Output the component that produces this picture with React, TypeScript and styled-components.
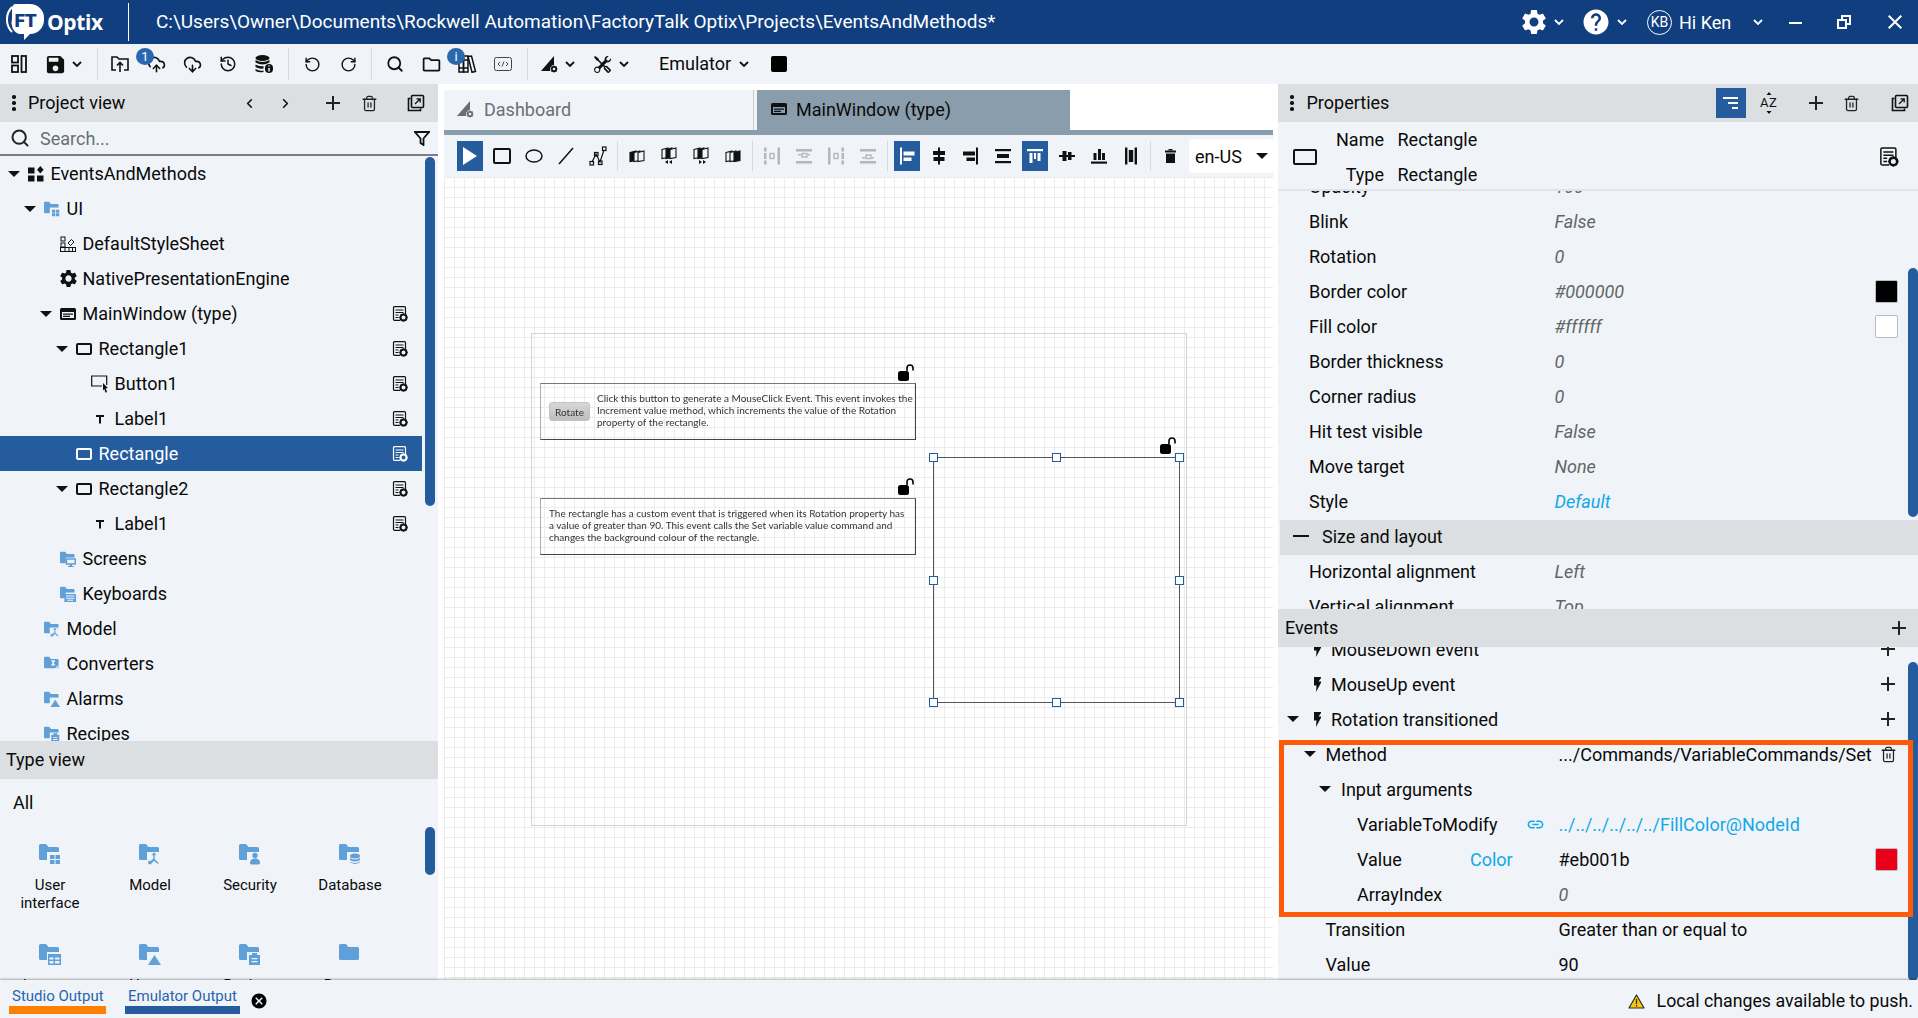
import React from 'react';
import styled, { createGlobalStyle } from 'styled-components';
import {
  ChevronLeft, ChevronRight, CloudDownload, CloudUpload, History, RotateCcw, RotateCw, Search, Trash2,
} from 'lucide-react';
import { MdAdd, MdCancel, MdClose, MdHelp, MdLink, MdOutlineFolder, MdSave, MdSettings } from 'react-icons/md';
import { BsTools } from 'react-icons/bs';

const GlobalStyle = createGlobalStyle`
  html, body { margin: 0; padding: 0; width: 1918px; height: 1018px; overflow: hidden; background: #fff; }
  * { box-sizing: border-box; }
  svg { flex: none; }
  body { font-family: Roboto, "Liberation Sans", sans-serif; font-size: 18px; color: #0a0a0a; }
`;

const Page = styled.div`
  width: 1918px;
  height: 1018px;
  display: flex;
  flex-direction: column;
`;

/* ---- title bar ---- */
const TitleBar = styled.header`
  height: 44px;
  flex: none;
  background: #103e7e;
  color: #fff;
  display: flex;
  align-items: center;
  padding-left: 6px;
`;
const Brand = styled.div`
  width: 123px;
  height: 38px;
  display: flex;
  align-items: center;
  gap: 2px;
  border-right: 1px solid #fff;
  font-size: 21px;
  font-weight: 700;
  font-family: "Open Sans", Roboto, sans-serif;
  letter-spacing: -0.4px;
`;
const TitlePath = styled.div`
  margin-left: 27px;
  padding-bottom: 2px;
  font-size: 19px;
  white-space: nowrap;
  flex: 1;
`;
const TitleActions = styled.div`
  display: flex;
  align-items: center;
  height: 100%;
`;
const TitleSlot = styled.span<{ $w: number; $ml?: number }>`
  width: ${p => p.$w}px;
  margin-left: ${p => p.$ml ?? 0}px;
  display: flex;
  align-items: center;
  justify-content: center;
`;
const Avatar = styled.span`
  width: 25px;
  height: 25px;
  border: 1px solid #fff;
  border-radius: 50%;
  font-size: 14px;
  display: flex;
  align-items: center;
  justify-content: center;
  margin: 0 7px 0 16px;
`;
const UserName = styled.span`
  font-size: 18px;
  width: 69px;
`;

/* ---- main toolbar ---- */
const MainToolbar = styled.div`
  height: 40px;
  flex: none;
  background: #f0f4f8;
  display: flex;
  align-items: center;
  padding-left: 1px;
`;
const TopSlot = styled.span<{ $w?: number; $ml?: number }>`
  position: relative;
  width: ${p => p.$w ?? 36}px;
  margin-left: ${p => p.$ml ?? 0}px;
  height: 100%;
  flex: none;
  display: flex;
  align-items: center;
  justify-content: center;
`;
const TopSep = styled.span<{ $l: number; $r: number }>`
  width: 1px;
  height: 32px;
  flex: none;
  background: #d6dadf;
  margin: 0 ${p => p.$r}px 0 ${p => p.$l}px;
`;
const Badge = styled.span`
  position: absolute;
  left: -2px;
  top: 4px;
  width: 18px;
  height: 17px;
  border-radius: 50%;
  background: #2a67ae;
  color: #fff;
  font-size: 13px;
  line-height: 17px;
  text-align: center;
`;
const EmulatorLabel = styled.span`
  margin-left: 31px;
  padding-bottom: 2px;
  width: 80px;
  font-size: 18px;
`;
const StopSquare = styled.span`
  width: 16px;
  height: 16px;
  background: #000;
  border-radius: 2px;
  margin-left: 22px;
`;

/* ---- panels ---- */
const Body = styled.div`
  height: 896px;
  flex: none;
  display: flex;
`;
const LeftPanel = styled.aside`
  width: 438px;
  flex: none;
  background: #f0f4f8;
  display: flex;
  flex-direction: column;
`;
const PanelHead = styled.div`
  height: 38px;
  flex: none;
  background: #dbdfe2;
  display: flex;
  align-items: center;
  position: relative;
  z-index: 2;
`;
const HeadDots = styled.span`
  width: 4px;
  margin: 0 12px;
  display: flex;
  flex-direction: column;
  gap: 2.5px;
  & > i { width: 3.5px; height: 3.5px; background: #111; border-radius: 50%; display: block; }
`;
const HeadTitle = styled.span<{ $w?: number; $pl?: number }>`
  flex: ${p => (p.$w ? 'none' : 1)};
  width: ${p => (p.$w ? `${p.$w}px` : 'auto')};
  padding: 0 0 2px ${p => p.$pl ?? 0}px;
`;
const HeadSlot = styled.span<{ $w: number; $ml?: number }>`
  width: ${p => p.$w}px;
  margin-left: ${p => p.$ml ?? 0}px;
  flex: none;
  display: flex;
  align-items: center;
  justify-content: center;
`;
const HeadActive = styled(HeadSlot)`
  height: 30px;
  background: #255c9e;
  margin-right: 5px;
`;
const SearchRow = styled.div`
  height: 34px;
  flex: none;
  display: flex;
  align-items: center;
  padding: 0 8px 0 10px;
  gap: 10px;
  border-bottom: 2px solid #7b7f83;
  color: #6a6f74;
`;
const SearchText = styled.span`
  flex: 1;
`;
const TreeArea = styled.div`
  height: 585px;
  flex: none;
  overflow: hidden;
  position: relative;
`;
const Thumb = styled.div<{ $top: number; $h: number; $right?: number }>`
  position: absolute;
  right: ${p => p.$right ?? 3}px;
  top: ${p => p.$top}px;
  height: ${p => p.$h}px;
  width: 10px;
  background: #255c9e;
  border-radius: 5px;
  z-index: 1;
`;
const TreeRow = styled.div<{ $depth: number; $selected?: boolean }>`
  width: 422px;
  height: 35px;
  display: flex;
  align-items: center;
  padding-left: ${p => 6 + p.$depth * 16}px;
  background: ${p => (p.$selected ? '#255c9e' : 'transparent')};
  color: ${p => (p.$selected ? '#fff' : '#0a0a0a')};
`;
const CaretSlot = styled.span`
  width: 22px;
  flex: none;
  padding-left: 2px;
`;
const Caret = styled.i`
  display: block;
  width: 0;
  height: 0;
  border-left: 6px solid transparent;
  border-right: 6px solid transparent;
  border-top: 6px solid #111;
`;
const TreeIcon = styled.span`
  width: 16px;
  height: 20px;
  flex: none;
  display: flex;
  align-items: center;
  justify-content: center;
  margin-right: 6.5px;
`;
const TreeLabel = styled.span`
  flex: 1;
  white-space: nowrap;
`;
const RowDoc = styled.span`
  width: 16px;
  margin-right: 14px;
  display: flex;
`;
const PropDoc = styled.span`
  width: 20px;
  margin-right: 19px;
  display: flex;
`;
const TypeArea = styled.div`
  flex: 1;
  min-height: 0;
  overflow: hidden;
  position: relative;
`;
const AllLabel = styled.div`
  height: 48px;
  line-height: 48px;
  padding-left: 13px;
`;
const TypeGrid = styled.div`
  display: grid;
  grid-template-columns: repeat(4, 100px);
  grid-auto-rows: 100px;
`;
const TypeItem = styled.div`
  display: flex;
  flex-direction: column;
  align-items: center;
  font-size: 15px;
  line-height: 18px;
  text-align: center;
  padding-top: 16px;
  gap: 11px;
`;
const TypeCaption = styled.span`
  width: 76px;
`;

/* ---- center ---- */
const Center = styled.main`
  flex: 1;
  min-width: 0;
  background: #fff;
  padding: 6px 5px 0 6px;
  display: flex;
  flex-direction: column;
`;
const Tabs = styled.div`
  height: 40px;
  flex: none;
  display: flex;
`;
const Tab = styled.div<{ $active?: boolean; $w: number }>`
  width: ${p => p.$w}px;
  background: ${p => (p.$active ? '#8a9dac' : '#f0f4f8')};
  color: ${p => (p.$active ? '#0a0a0a' : '#6b6f73')};
  border-right: ${p => (p.$active ? 'none' : '1px solid #c9ced3')};
  display: flex;
  align-items: center;
  gap: ${p => (p.$active ? 9 : 10)}px;
  padding: 0 0 2px ${p => (p.$active ? 14 : 13)}px;
`;
const TabGap = styled.span`
  width: 3px;
  background: #f0f4f8;
`;
const TabRule = styled.div`
  height: 5px;
  flex: none;
  background: #8a9dac;
`;
const CanvasBar = styled.div`
  height: 42px;
  flex: none;
  background: #f0f4f8;
  display: flex;
  align-items: center;
  padding-left: 13px;
  gap: 6px;
`;
const ToolBtn = styled.span<{ $on?: boolean }>`
  width: 26px;
  height: 30px;
  flex: none;
  background: ${p => (p.$on ? '#255c9e' : 'transparent')};
  display: flex;
  align-items: center;
  justify-content: center;
`;
const ToolSep = styled.span`
  width: 1px;
  height: 30px;
  flex: none;
  background: #d6dadf;
`;
const LangBox = styled.span`
  width: 84px;
  height: 34px;
  flex: none;
  background: #fff;
  border-radius: 3px;
  display: flex;
  align-items: center;
  justify-content: space-between;
  padding: 0 5px 0 6px;
`;
const Canvas = styled.div`
  flex: 1;
  position: relative;
  overflow: hidden;
  background-color: #fff;
  background-image:
    linear-gradient(#ececec 1px, transparent 1px),
    linear-gradient(90deg, #ececec 1px, transparent 1px);
  background-size: 10px 10px;
`;
const Frame = styled.div<{ $x: number; $y: number; $w: number; $h: number }>`
  position: absolute;
  left: ${p => p.$x}px;
  top: ${p => p.$y}px;
  width: ${p => p.$w}px;
  height: ${p => p.$h}px;
`;
const ScreenFrame = styled(Frame)`
  border: 1.5px solid #d4d4d4;
`;
const NoteBox = styled(Frame)`
  border: 1px solid #444;
  border-top-color: #777;
  border-left-color: #aaa;
  display: flex;
  align-items: center;
  padding-bottom: 4px;
  font-family: Lato, "Liberation Sans", sans-serif;
  font-size: 10px;
  line-height: 12px;
  color: #333;
  filter: blur(0.25px);
`;
const NoteText = styled.p<{ $pl: number; $w: number }>`
  margin: 0 0 0 ${p => p.$pl}px;
  width: ${p => p.$w}px;
  flex: none;
`;
const RotateBtn = styled.span`
  position: absolute;
  left: 8px;
  top: 18px;
  width: 41px;
  height: 19px;
  background: linear-gradient(#d8d8d8, #bdbdbd);
  border: 1px solid #c4c4c4;
  border-radius: 3px;
  display: flex;
  align-items: center;
  justify-content: center;
`;
const SelectBox = styled(Frame)`
  border: 1.5px solid #555;
`;
const Handle = styled.i<{ $l: number; $t: number }>`
  position: absolute;
  left: calc(${p => p.$l}% + ${p => (p.$l / 100) * 1.5}px - 5.25px);
  top: calc(${p => p.$t}% + ${p => (p.$t / 100) * 1.5}px - 5.25px);
  width: 9px;
  height: 9px;
  background: #fff;
  border: 1px solid #255c9e;
`;

/* ---- right ---- */
const RightPanel = styled.aside`
  width: 640px;
  flex: none;
  background: #f0f4f8;
  display: flex;
  flex-direction: column;
`;
const PropsTitle = styled(HeadTitle)`
  margin-left: 1px;
`;
const NameBox = styled.div`
  height: 69px;
  flex: none;
  display: flex;
  align-items: center;
  padding: 2px 0 0 15px;
  border-bottom: 2px solid #e0e3e7;
  position: relative;
  z-index: 1;
  background: #f0f4f8;
`;
const NameGrid = styled.div`
  width: 300px;
  margin-right: auto;
  display: grid;
  grid-template-columns: 67px 1fr;
  grid-auto-rows: 35px;
  column-gap: 13.5px;
  align-items: center;
`;
const NameLabel = styled.span`
  text-align: right;
`;
const PropScroll = styled.div`
  height: 418px;
  flex: none;
  overflow: hidden;
  position: relative;
`;
const PropList = styled.div`
  margin-top: -21.5px;
`;
const PropRow = styled.div`
  height: 35px;
  display: grid;
  grid-template-columns: 245.5px 1fr auto;
  align-items: center;
  padding: 0 20px 2px 31px;
`;
const PropValue = styled.span<{ $link?: boolean }>`
  font-style: italic;
  color: ${p => (p.$link ? '#12a8e8' : '#62666a')};
`;
const Swatch = styled.span<{ $c: string }>`
  width: 23px;
  height: 23px;
  border-radius: 2px;
  background: ${p => p.$c};
  border: 1px solid #b9bdc1;
  display: block;
`;
const SectionRow = styled.div`
  height: 35px;
  background: #dbdfe2;
  display: flex;
  align-items: center;
  padding: 0 0 2px 13px;
  gap: 13px;
  margin-left: 2px;
`;
const Dash = styled.i`
  width: 16px;
  height: 2px;
  background: #111;
`;
const EventsScroll = styled.div`
  flex: 1;
  min-height: 0;
  overflow: hidden;
  position: relative;
`;
const EventList = styled.div`
  margin-top: -14.5px;
`;
const EventRow = styled.div<{ $pad: number }>`
  height: 35px;
  display: grid;
  grid-template-columns: ${p => 280.5 - p.$pad}px 1fr 44px;
  align-items: center;
  padding: 0 0 2px ${p => p.$pad}px;
  white-space: nowrap;
`;
const EventName = styled.span`
  display: flex;
  align-items: center;
`;
const EventCaret = styled.span<{ $w?: number }>`
  width: ${p => p.$w ?? 22}px;
  flex: none;
  margin-left: -${p => (p.$w ? p.$w + 18 : 22)}px;
`;
const BoltWrap = styled.span<{ $inline?: boolean }>`
  width: 18px;
  flex: none;
  margin-left: ${p => (p.$inline ? 0 : -18)}px;
  display: flex;
`;
const ArgName = styled.span`
  width: 113px;
  flex: none;
`;
const TypeTag = styled.span`
  color: #12a8e8;
`;
const LinkSlot = styled.span`
  margin-left: auto;
  margin-right: 14px;
  display: flex;
  color: #12a8e8;
`;
const LinkValue = styled.span`
  color: #12a8e8;
`;
const RowTool = styled.span<{ $pl: number }>`
  display: flex;
  align-items: center;
  padding-left: ${p => p.$pl}px;
`;
const FaintValue = styled.span`
  font-style: italic;
  color: #62666a;
`;
const Highlight = styled.div`
  position: absolute;
  left: 1px;
  right: 5px;
  top: 93px;
  height: 177px;
  border: 5px solid #ff5a0a;
  z-index: 2;
  pointer-events: none;
`;

/* ---- status bar ---- */
const StatusBar = styled.footer`
  height: 38px;
  flex: none;
  background: #f0f4f8;
  box-shadow: 0 -1px 2px rgba(0, 0, 0, 0.3);
  position: relative;
  z-index: 3;
  display: flex;
  align-items: flex-start;
  padding-left: 9px;
`;
const OutputTab = styled.span<{ $c: string; $w: number; $mr?: number }>`
  width: ${p => p.$w}px;
  margin-right: ${p => p.$mr ?? 0}px;
  height: 34px;
  padding: 7px 0 0 3px;
  font-size: 15px;
  line-height: 19px;
  white-space: nowrap;
  color: #2a63ad;
  border-bottom: 8px solid ${p => p.$c};
`;
const OutputClose = styled.span`
  margin: 12px 0 0 10px;
  display: flex;
`;
const PushNote = styled.span`
  margin-left: auto;
  height: 100%;
  display: flex;
  align-items: center;
  gap: 12px;
  padding: 0 5px 0 0;
  font-size: 17.75px;
  position: relative;
  top: 2px;
`;

/* ---- drawn icons ---- */
const Chev = ({ c = '#111' }: { c?: string }) => (
  <svg width="10" height="7" viewBox="0 0 10 7"><path d="M1 1l4 4 4-4" fill="none" stroke={c} strokeWidth="1.800" /></svg>
);

const DocGear = ({ c = '#111', size = 16 }: { c?: string; size?: number }) => (
  <svg width={size} height={size} viewBox="0 0 16 16">
    <path d="M2.500.7h10a1 1 0 0 1 1 1v6.500M8 14.300H2.500a1 1 0 0 1-1-1V1.700a1 1 0 0 1 1-1" fill="none" stroke={c} strokeWidth="1.200" />
    <path d="M3.500 4h8M3.500 6.500h8M3.500 9h3M3.500 11.500h3" stroke={c} strokeWidth="1.200" />
    <circle cx="11.500" cy="11.500" r="3" fill="none" stroke={c} strokeWidth="2" />
    <path d="M11.500 7.400v1.400M11.500 14.200v1.400M7.400 11.500h1.400M14.200 11.500h1.400M8.700 8.700l1 1M13.300 13.300l1 1M8.700 14.300l1-1M13.300 9.700l1-1" stroke={c} strokeWidth="1.400" />
  </svg>
);

const PopOut = () => (
  <svg width="18" height="18" viewBox="0 0 18 18" fill="none" stroke="#111" strokeWidth="1.600">
    <path d="M3.500 4.500H1.500v12h12v-2" />
    <rect x="4.500" y="1.500" width="12" height="12" rx="1" />
    <path d="M8 10l5-5M9.500 4.800h3.700v3.700" strokeWidth="1.300" />
  </svg>
);

const RectGlyph = ({ c = '#111', w = 16, h = 12 }: { c?: string; w?: number; h?: number }) => (
  <svg width={w} height={h} viewBox={`0 0 ${w} ${h}`}>
    <rect x="1" y="1" width={w - 2} height={h - 2} rx="1" fill="none" stroke={c} strokeWidth="2" />
  </svg>
);

const WindowGlyph = () => (
  <svg width="16" height="12" viewBox="0 0 16 12">
    <path fillRule="evenodd" d="M1.500 0h13A1.500 1.500 0 0 1 16 1.500v9a1.500 1.500 0 0 1-1.500 1.500h-13A1.500 1.500 0 0 1 0 10.500v-9A1.500 1.500 0 0 1 1.500 0zM2 4v6h12V4zM3 5.500h10v1.200H3zM3 7.800h7V9H3z" fill="#111" />
  </svg>
);

const FolderIcon = ({ kind, size = 16 }: { kind: string; size?: number }) => {
  const b = '#5fa0d8';
  const bg = '#f0f4f8';
  const glyphs: Record<string, React.ReactNode> = {
    ui: <><path d="M11 12h4.500v4H11zM16.500 12H21v4h-4.500zM11 17h4.500v4H11zM16.500 17H21v4h-4.500z" fill={b} /></>,
    model: <><path d="M15 9l3 3h-2v4l4 4-1 1.500-4-3.500-3 3.500h-3v-4h3l2-2v-3h-2z" fill={b} stroke={bg} strokeWidth=".6" /></>,
    security: <><circle cx="16" cy="12.500" r="2.700" fill={b} /><path d="M11 20q0-4.500 5-4.500t5 4.500q0 1.500-1.500 1.500h-7Q11 21.500 11 20z" fill={b} /></>,
    db: <><ellipse cx="16" cy="13" rx="5" ry="2.500" fill={b} /><path d="M11 15q5 3 10 0v2q-5 3-10 0zM11 18.500q5 3 10 0v.8q-5 3.400-10 0z" fill={b} /></>,
    table: <path fillRule="evenodd" d="M9 11h13v11H9zM10.500 14.500v2h4v-2zM16 14.500v2h4.500v-2zM10.500 18v2.500h4V18zM16 18v2.500h4.500V18z" fill={b} />,
    alarm: <path d="M15.500 12l6.500 10H9z" fill={b} />,
    recipe: <path fillRule="evenodd" d="M10 12h3v-2h5v2h3v10H10zM12.500 15v1.300h6V15zM12.500 18v1.300h6V18z" fill={b} />,
    screen: <path fillRule="evenodd" d="M8 10h14v9h-5.500v1.500H19V22h-8v-1.500h2.500V19H8zM10 12v5h10v-5z" fill={b} />,
    keys: <path fillRule="evenodd" d="M6 11h16v11H6zM8 13v1.500h12V13zM8 16v1.500h12V16zM10 19v1.200h8V19z" fill={b} />,
    conv: <path d="M10 6h5v1.500l-2 2 2 2v1.500h-5v-1l2-2.500-2-2.500zM11 21l8-8 1 1-8 8zM17 19h4v3h-4z" fill={bg} />,
    plain: null,
  };
  return (
    <svg width={size} height={size} viewBox="0 0 22 22" style={{ overflow: 'visible' }}>
      <path d="M0 2.500Q0 1 1.500 1h5.500l2.500 3h9Q20 4 20 5.500v10q0 1.500-1.500 1.500h-17Q0 17 0 15.500z" fill={b} />
      {kind !== 'plain' && kind !== 'conv' && <rect x="8" y="9" width="15" height="14" fill={bg} />}
      {glyphs[kind]}
    </svg>
  );
};

const ProjectGlyph = () => (
  <svg width="16" height="16" viewBox="0 0 16 16" fill="#111">
    <rect x="0" y="1.500" width="6.500" height="6" />
    <rect x="0" y="9.500" width="6.500" height="6" />
    <rect x="9" y="9.500" width="6.500" height="6" />
    <path d="M12.300 0l3.300 3.800-3.300 3.800L9 3.800z" />
  </svg>
);

const StyleGlyph = () => (
  <svg width="16" height="16" viewBox="0 0 16 16" fill="none" stroke="#111" strokeWidth="1">
    <rect x="1" y="1" width="4" height="4" />
    <rect x="1" y="7" width="4" height="4" />
    <rect x=".5" y="11.500" width="15" height="4" />
    <path d="M5 15.500v-4M9 15.500v-4M12.500 15.500v-4M8 7l3.500-3.500 2.500 2.500-3.500 3.500z" />
  </svg>
);

const TextGlyph = ({ c = '#111' }: { c?: string }) => (
  <svg width="10" height="10" viewBox="0 0 10 10"><path d="M1 1h8v2H6v6.500H4V3H1z" fill={c} /></svg>
);

const ButtonGlyph = () => (
  <svg width="18" height="18" viewBox="0 0 18 18">
    <path d="M11 11H.7V1h15v9" fill="none" stroke="#111" strokeWidth="1.200" />
    <path d="M12 8l5 5-2.200.3L16 17l-1.500.7-1.200-3.700L12 15.500z" fill="#111" />
  </svg>
);

const Bolt = () => (
  <svg width="9" height="15" viewBox="0 0 9 15"><path d="M1 0h7v1L5.500 4.500H8v1.200L3 15l.5-6.500H1z" fill="#111" /></svg>
);

const OpenLock = () => (
  <svg width="17" height="18" viewBox="0 0 17 18">
    <rect x="0" y="7" width="11" height="10" rx="2.500" fill="#000" />
    <path d="M9 7V4a3 3 0 0 1 6 0v2.500" fill="none" stroke="#000" strokeWidth="1.600" />
  </svg>
);

const Warn = () => (
  <svg width="17" height="15" viewBox="0 0 17 15">
    <path d="M8.500 1L16 14H1z" fill="#f6c90e" stroke="#2b2b2b" strokeWidth="1.200" strokeLinejoin="round" />
    <path d="M8.500 5v5M8.500 11v1.500" stroke="#2b2b2b" strokeWidth="1.300" />
  </svg>
);

const Logo = () => (
  <svg width="39" height="40" viewBox="0 0 39 40">
    <path d="M6 30A18 18 0 0 1 6 5" fill="none" stroke="#fff" strokeWidth="2" />
    <path d="M9 2h15a14 14 0 0 1 14 14v2a14 14 0 0 1-14 14l-6 6v-6H13A12 12 0 0 1 6 17V7a5 5 0 0 1 3-5z" fill="#fff" />
    <text x="8.500" y="25" fontFamily="Roboto, sans-serif" fontWeight="900" fontSize="19" fill="#103e7e">FT</text>
  </svg>
);

const PanelsGlyph = () => (
  <svg width="16" height="18" viewBox="0 0 16 18" fill="none" stroke="#111" strokeWidth="1.800">
    <rect x="1" y="1" width="6" height="6.500" />
    <rect x="1" y="10.500" width="6" height="6.500" />
    <rect x="10.500" y="1" width="4.500" height="16" />
  </svg>
);

const FolderUp = () => (
  <svg width="18" height="18" viewBox="0 0 18 18" fill="none" stroke="#111" strokeWidth="1.600">
    <path d="M5 15H1V2h5l2 2h9v11h-4" />
    <path d="M9 17V8M6 10.500L9 7.500l3 3" />
  </svg>
);

const DbInfo = () => (
  <svg width="18" height="18" viewBox="0 0 18 18">
    <ellipse cx="7.500" cy="3" rx="7" ry="3" fill="#111" />
    <path d="M.5 5q7 4 14 0v2.500q-7 4-14 0zM.5 9.500q4 2.500 8 1.500v2.500q-4 1-8-1.500zM.5 14q4 2.500 8 1.500v1.500q-4 1-8-1z" fill="#111" />
    <rect x="10" y="9" width="8" height="9" rx="4" fill="#111" />
    <path d="M14 10.500v1M14 13v3.500" stroke="#f0f4f8" strokeWidth="1.500" />
  </svg>
);

const Books = () => (
  <svg width="19" height="18" viewBox="0 0 19 18" fill="none" stroke="#111" strokeWidth="1.500">
    <rect x="1" y="1" width="4.500" height="16" />
    <rect x="5.500" y="1" width="4.500" height="16" />
    <path d="M10 1.500l3.500-.5 4 15.500-3.500.8zM1 5h9M1 13h9" />
  </svg>
);

const CodeBox = () => (
  <svg width="18" height="16" viewBox="0 0 18 16" fill="none" stroke="#444">
    <rect x=".5" y="1.500" width="17" height="13" rx="2" />
    <path d="M6 6L4 8l2 2M12 6l2 2-2 2M10 5.500L8 10.500" />
  </svg>
);

const DashGlyph = ({ c = '#111' }: { c?: string }) => (
  <svg width="17" height="17" viewBox="0 0 17 17">
    <path d="M13 0v9a4.500 4.500 0 0 0-3.800 6H0z" fill={c} />
    <circle cx="13" cy="13" r="2.200" fill="none" stroke={c} strokeWidth="1.800" />
    <path d="M13 9.500v1M13 15.500v1M9.500 13h1M15.500 13h1M10.500 10.500l.8.800M14.700 14.700l.8.800M10.500 15.500l.8-.800M14.700 11.300l.8-.800" stroke={c} strokeWidth="1.200" />
  </svg>
);

const Filter = () => (
  <svg width="16" height="16" viewBox="0 0 16 16"><path d="M1 2h14L9.500 8.500V15l-3-2V8.500z" fill="none" stroke="#111" strokeWidth="1.800" /></svg>
);

const AzSort = () => (
  <svg width="18" height="24" viewBox="0 0 18 24">
    <path d="M9 1l2.500 3h-5zM9 23l2.500-3h-5z" fill="#111" />
    <text x="0" y="16" fontFamily="Roboto, sans-serif" fontSize="13" fill="#111">A</text>
    <text x="9" y="16" fontFamily="Roboto, sans-serif" fontSize="13" fill="#111">Z</text>
  </svg>
);

const GroupSort = () => (
  <svg width="16" height="12" viewBox="0 0 16 12" fill="#fff">
    <rect x="0" y="0" width="15" height="2" />
    <rect x="5" y="5" width="10" height="2" />
    <rect x="9" y="10" width="6" height="2" />
  </svg>
);

const SolidBin = () => (
  <svg width="11" height="14" viewBox="0 0 11 14" fill="#111">
    <rect x="3.500" y="0" width="4" height="1.500" />
    <rect x="0" y="1.500" width="11" height="2" />
    <path d="M1 4.500h9V14H1z" />
  </svg>
);

// each layout icon is just a set of bars in a 20 box
type Bar = [number, number, number, number];
const Bars = ({ bars, c = '#111', hollow }: { bars: Bar[]; c?: string; hollow?: Bar[] }) => (
  <svg width="20" height="24" viewBox="0 0 20 24">
    {bars.map((b, i) => <rect key={i} x={b[0]} y={b[1]} width={b[2]} height={b[3]} fill={c} />)}
    {hollow?.map((b, i) => <rect key={i} x={b[0]} y={b[1]} width={b[2]} height={b[3]} fill="none" stroke={c} strokeWidth="1.400" />)}
  </svg>
);

const GRAY = '#b4b8bc';
const distH: { bars: Bar[]; hollow: Bar[] }[] = [
  { bars: [[2, 3.500, 2.500, 4], [2, 9, 2.500, 6], [2, 16.500, 2.500, 4], [15.500, 3.500, 2.500, 17]], hollow: [[8, 9.500, 4, 5]] },
  { bars: [[2, 5, 16, 2.500], [2, 17, 16, 2.500], [4, 10, 3, 1.500], [14, 10, 2, 1.500]], hollow: [[8, 9.500, 5, 3.500]] },
  { bars: [[2, 3.500, 2.500, 17], [15.500, 3.500, 2.500, 4], [15.500, 9, 2.500, 6], [15.500, 16.500, 2.500, 4]], hollow: [[8, 9.500, 4, 5]] },
  { bars: [[2, 5, 16, 2.500], [2, 17, 16, 2.500], [4, 13, 3, 1.500], [14, 13, 2, 1.500]], hollow: [[8, 11, 5, 3.500]] },
];
const alignLeft: Bar[] = [[3, 3.500, 2, 17], [6.500, 7.500, 11, 4], [6.500, 13.500, 8, 3.500]];
const alignCenter: Bar[] = [[9, 3.500, 2, 17], [4, 7, 12, 4], [4.500, 13, 11, 4]];
const alignRight: Bar[] = [[15, 3.500, 2, 17], [2, 7.500, 12, 4], [5.500, 13.500, 8.500, 3.500]];
const alignMiddle: Bar[] = [[2, 5, 16, 2.200], [4, 10, 12, 4], [2, 17, 16, 2.200]];
const alignTop: Bar[] = [[2, 5, 16, 2.200], [4.500, 9, 3, 10], [9, 9, 2, 6], [12.500, 9, 3, 8]];
const alignVCenter: Bar[] = [[2, 11, 16, 2], [5.500, 7, 4, 10], [11, 8, 3.500, 8]];
const alignBottom: Bar[] = [[2, 17.500, 16, 2.200], [4.500, 9, 3, 7], [9, 5, 3, 11], [13, 9, 3, 7]];
const alignSpread: Bar[] = [[4, 3.500, 2.400, 17], [13.600, 3.500, 2.400, 17], [7.800, 6, 4.400, 12]];

// order icons: panes in a row, a solid one standing for the object being moved
const Pane = ({ x, y, solid }: { x: number; y: number; solid?: boolean }) => (
  <path
    d={`M${x} ${y}l6-1.500v9.500l-6 1z`}
    fill={solid ? '#111' : '#f0f4f8'}
    stroke="#111"
    strokeWidth="1.100"
  />
);
const Stack = ({ solid, up, arrows }: { solid: number; up?: boolean; arrows?: 'down' | 'up' }) => {
  const y = up ? 5.500 : 8.500;
  return (
    <svg width="18" height="24" viewBox="0 0 18 24">
      {[2, 6, 10].map((x, i) => <Pane key={x} x={x} y={y} solid={i === solid} />)}
      {arrows === 'down' && <path d="M5 18l3-2v4zM9 18l3-2v4z" fill="#111" />}
      {arrows === 'up' && <path d="M7 16v4l3-2zM11 16v4l3-2z" fill="#111" />}
    </svg>
  );
};

/* ---- data ---- */
type TreeItem = { label: string; depth: number; caret?: boolean; icon: React.ReactNode; doc?: boolean; selected?: boolean };
const treeItems: TreeItem[] = [
  { label: 'EventsAndMethods', depth: 0, caret: true, icon: <ProjectGlyph /> },
  { label: 'UI', depth: 1, caret: true, icon: <FolderIcon kind="ui" /> },
  { label: 'DefaultStyleSheet', depth: 2, icon: <StyleGlyph /> },
  { label: 'NativePresentationEngine', depth: 2, icon: <MdSettings size={21} color="#111" /> },
  { label: 'MainWindow (type)', depth: 2, caret: true, icon: <WindowGlyph />, doc: true },
  { label: 'Rectangle1', depth: 3, caret: true, icon: <RectGlyph />, doc: true },
  { label: 'Button1', depth: 4, icon: <ButtonGlyph />, doc: true },
  { label: 'Label1', depth: 4, icon: <TextGlyph />, doc: true },
  { label: 'Rectangle', depth: 3, icon: <RectGlyph c="#fff" />, doc: true, selected: true },
  { label: 'Rectangle2', depth: 3, caret: true, icon: <RectGlyph />, doc: true },
  { label: 'Label1', depth: 4, icon: <TextGlyph />, doc: true },
  { label: 'Screens', depth: 2, icon: <FolderIcon kind="screen" /> },
  { label: 'Keyboards', depth: 2, icon: <FolderIcon kind="keys" /> },
  { label: 'Model', depth: 1, icon: <FolderIcon kind="model" /> },
  { label: 'Converters', depth: 1, icon: <FolderIcon kind="conv" /> },
  { label: 'Alarms', depth: 1, icon: <FolderIcon kind="alarm" /> },
  { label: 'Recipes', depth: 1, icon: <FolderIcon kind="recipe" /> },
];

const typeItems = [
  { label: 'User interface', kind: 'ui' },
  { label: 'Model', kind: 'model' },
  { label: 'Security', kind: 'security' },
  { label: 'Database', kind: 'db' },
  { label: 'Loggers', kind: 'table' },
  { label: 'Alarms', kind: 'alarm' },
  { label: 'Recipes', kind: 'recipe' },
  { label: 'Reports', kind: 'plain' },
];

const props: { name: string; value: string; swatch?: string; link?: boolean }[] = [
  { name: 'Opacity', value: '100' },
  { name: 'Blink', value: 'False' },
  { name: 'Rotation', value: '0' },
  { name: 'Border color', value: '#000000', swatch: '#000' },
  { name: 'Fill color', value: '#ffffff', swatch: '#fff' },
  { name: 'Border thickness', value: '0' },
  { name: 'Corner radius', value: '0' },
  { name: 'Hit test visible', value: 'False' },
  { name: 'Move target', value: 'None' },
  { name: 'Style', value: 'Default', link: true },
];

const handles = [[0, 0], [50, 0], [100, 0], [0, 50], [100, 50], [0, 100], [50, 100], [100, 100]];

const Plus = () => <MdAdd size={24} color="#222" />;
const Bin = () => <Trash2 size={17} color="#222" strokeWidth={1.8} />;

const App = () => {
  return (
    <Page>
      <GlobalStyle />
      <TitleBar>
        <Brand><Logo />Optix</Brand>
        <TitlePath>C:\Users\Owner\Documents\Rockwell Automation\FactoryTalk Optix\Projects\EventsAndMethods*</TitlePath>
        <TitleActions>
          <TitleSlot $w={32}><MdSettings size={30} /></TitleSlot>
          <TitleSlot $w={18}><Chev c="#fff" /></TitleSlot>
          <TitleSlot $w={34} $ml={11}><MdHelp size={30} /></TitleSlot>
          <TitleSlot $w={18}><Chev c="#fff" /></TitleSlot>
          <Avatar>KB</Avatar>
          <UserName>Hi Ken</UserName>
          <TitleSlot $w={20}><Chev c="#fff" /></TitleSlot>
          <TitleSlot $w={54}><svg width="13" height="3"><rect width="13" height="2" y="1" fill="#fff" /></svg></TitleSlot>
          <TitleSlot $w={44}>
            <svg width="14" height="14" viewBox="0 0 14 14" fill="none" stroke="#fff" strokeWidth="2"><rect x="1" y="5" width="8" height="8" /><path d="M5 4V1h8v8h-3" /></svg>
          </TitleSlot>
          <TitleSlot $w={46} $ml={6}><MdClose size={24} /></TitleSlot>
        </TitleActions>
      </TitleBar>

      <MainToolbar>
        <TopSlot><PanelsGlyph /></TopSlot>
        <TopSlot><MdSave size={23} color="#111" /></TopSlot>
        <TopSlot $w={8}><Chev /></TopSlot>
        <TopSep $l={16} $r={4} />
        <TopSlot><FolderUp /></TopSlot>
        <TopSlot><Badge>1</Badge><CloudUpload size={19} color="#111" /></TopSlot>
        <TopSlot><CloudDownload size={19} color="#111" /></TopSlot>
        <TopSlot><History size={18} color="#111" /></TopSlot>
        <TopSlot><DbInfo /></TopSlot>
        <TopSep $l={6} $r={5} />
        <TopSlot><RotateCcw size={17} color="#111" /></TopSlot>
        <TopSlot><RotateCw size={17} color="#111" /></TopSlot>
        <TopSep $l={5} $r={5} />
        <TopSlot><Search size={18} color="#111" strokeWidth={2.4} /></TopSlot>
        <TopSlot><MdOutlineFolder size={21} color="#111" /></TopSlot>
        <TopSlot><Badge>i</Badge><Books /></TopSlot>
        <TopSlot><CodeBox /></TopSlot>
        <TopSep $l={6} $r={5} />
        <TopSlot $w={32}><DashGlyph /></TopSlot>
        <TopSlot $w={10}><Chev /></TopSlot>
        <TopSlot $w={36} $ml={9}><BsTools size={17} color="#111" /></TopSlot>
        <TopSlot $w={8}><Chev /></TopSlot>
        <EmulatorLabel>Emulator</EmulatorLabel>
        <Chev />
        <StopSquare />
      </MainToolbar>

      <Body>
        <LeftPanel>
          <PanelHead>
            <HeadDots><i /><i /><i /></HeadDots>
            <HeadTitle $w={203}>Project view</HeadTitle>
            <HeadSlot $w={36}><ChevronLeft size={15} color="#111" strokeWidth={2.6} /></HeadSlot>
            <HeadSlot $w={36}><ChevronRight size={15} color="#111" strokeWidth={2.6} /></HeadSlot>
            <HeadSlot $w={60}><Plus /></HeadSlot>
            <HeadSlot $w={12}><Bin /></HeadSlot>
            <HeadSlot $w={38} $ml={22}><PopOut /></HeadSlot>
          </PanelHead>
          <SearchRow>
            <Search size={20} color="#222" strokeWidth={2.4} />
            <SearchText>Search...</SearchText>
            <Filter />
          </SearchRow>
          <TreeArea>
            <Thumb $top={1} $h={349} />
            {treeItems.map((item, i) => (
              <TreeRow key={i} $depth={item.depth} $selected={item.selected}>
                <CaretSlot>{item.caret && <Caret />}</CaretSlot>
                <TreeIcon>{item.icon}</TreeIcon>
                <TreeLabel>{item.label}</TreeLabel>
                {item.doc && <RowDoc><DocGear c={item.selected ? '#fff' : '#111'} /></RowDoc>}
              </TreeRow>
            ))}
          </TreeArea>
          <PanelHead><HeadTitle $pl={6}>Type view</HeadTitle></PanelHead>
          <TypeArea>
            <Thumb $top={48} $h={48} />
            <AllLabel>All</AllLabel>
            <TypeGrid>
              {typeItems.map(t => (
                <TypeItem key={t.label}>
                  <FolderIcon kind={t.kind} size={22} />
                  <TypeCaption>{t.label}</TypeCaption>
                </TypeItem>
              ))}
            </TypeGrid>
          </TypeArea>
        </LeftPanel>

        <Center>
          <Tabs>
            <Tab $w={310}><DashGlyph c="#6b6f73" />Dashboard</Tab>
            <TabGap />
            <Tab $w={313} $active><WindowGlyph />MainWindow (type)</Tab>
          </Tabs>
          <TabRule />
          <CanvasBar>
            <ToolBtn $on><svg width="16" height="18" viewBox="0 0 16 18"><path d="M1 0l14 9-14 9z" fill="#fff" /></svg></ToolBtn>
            <ToolBtn><RectGlyph w={18} h={16} /></ToolBtn>
            <ToolBtn><svg width="18" height="14" viewBox="0 0 18 14"><ellipse cx="9" cy="7" rx="8" ry="6" fill="none" stroke="#111" strokeWidth="1.500" /></svg></ToolBtn>
            <ToolBtn><svg width="18" height="18" viewBox="0 0 18 18"><path d="M2 17L16 1" stroke="#111" strokeWidth="1.500" /></svg></ToolBtn>
            <ToolBtn>
              <svg width="18" height="20" viewBox="0 0 18 20" fill="none" stroke="#111" strokeWidth="1.200">
                <path d="M3 16L7 8l4 8 4-12" /><rect x="1" y="15.500" width="3.500" height="3.500" /><rect x="5.500" y="6.500" width="3.500" height="3.500" /><rect x="9.500" y="15" width="3.500" height="3.500" /><rect x="13.500" y="1" width="3.500" height="3.500" />
              </svg>
            </ToolBtn>
            <ToolSep />
            <ToolBtn><Stack solid={0} /></ToolBtn>
            <ToolBtn><Stack solid={1} up arrows="down" /></ToolBtn>
            <ToolBtn><Stack solid={1} up arrows="up" /></ToolBtn>
            <ToolBtn><Stack solid={2} /></ToolBtn>
            <ToolSep />
            {distH.map((d, i) => <ToolBtn key={i}><Bars bars={d.bars} hollow={d.hollow} c={GRAY} /></ToolBtn>)}
            <ToolSep />
            <ToolBtn $on><Bars bars={alignLeft} c="#fff" /></ToolBtn>
            <ToolBtn><Bars bars={alignCenter} /></ToolBtn>
            <ToolBtn><Bars bars={alignRight} /></ToolBtn>
            <ToolBtn><Bars bars={alignMiddle} /></ToolBtn>
            <ToolBtn $on><Bars bars={alignTop} c="#fff" /></ToolBtn>
            <ToolBtn><Bars bars={alignVCenter} /></ToolBtn>
            <ToolBtn><Bars bars={alignBottom} /></ToolBtn>
            <ToolBtn><Bars bars={alignSpread} /></ToolBtn>
            <ToolSep />
            <ToolBtn><SolidBin /></ToolBtn>
            <LangBox>en-US<Caret /></LangBox>
          </CanvasBar>
          <Canvas>
            <ScreenFrame $x={87} $y={156} $w={656} $h={493} />
            <Frame $x={454} $y={187} $w={17} $h={18}><OpenLock /></Frame>
            <NoteBox $x={96} $y={206} $w={376} $h={57}>
              <RotateBtn>Rotate</RotateBtn>
              <NoteText $pl={56} $w={320}>Click this button to generate a MouseClick Event. This event invokes the Increment value method, which increments the value of the Rotation property of the rectangle.</NoteText>
            </NoteBox>
            <Frame $x={454} $y={301} $w={17} $h={18}><OpenLock /></Frame>
            <NoteBox $x={96} $y={321} $w={376} $h={57}>
              <NoteText $pl={8} $w={362}>The rectangle has a custom event that is triggered when its Rotation property has a value of greater than 90. This event calls the Set variable value command and changes the background colour of the rectangle.</NoteText>
            </NoteBox>
            <Frame $x={716} $y={260} $w={17} $h={18}><OpenLock /></Frame>
            <SelectBox $x={489} $y={280} $w={247} $h={246}>
              {handles.map(([l, t], i) => <Handle key={i} $l={l} $t={t} />)}
            </SelectBox>
          </Canvas>
        </Center>

        <RightPanel>
          <PanelHead>
            <HeadDots><i /><i /><i /></HeadDots>
            <PropsTitle $w={409}>Properties</PropsTitle>
            <HeadActive $w={30}><GroupSort /></HeadActive>
            <HeadSlot $w={36}><AzSort /></HeadSlot>
            <HeadSlot $w={44} $ml={7}><Plus /></HeadSlot>
            <HeadSlot $w={28}><Bin /></HeadSlot>
            <HeadSlot $w={68}><PopOut /></HeadSlot>
          </PanelHead>
          <NameBox>
            <RectGlyph w={24} h={16} />
            <NameGrid>
              <NameLabel>Name</NameLabel><span>Rectangle</span>
              <NameLabel>Type</NameLabel><span>Rectangle</span>
            </NameGrid>
            <PropDoc><DocGear size={20} /></PropDoc>
          </NameBox>
          <PropScroll>
            <Thumb $top={77} $h={249} $right={0} />
            <PropList>
              {props.map(p => (
                <PropRow key={p.name}>
                  <span>{p.name}</span>
                  <PropValue $link={p.link}>{p.value}</PropValue>
                  {p.swatch && <Swatch $c={p.swatch} />}
                </PropRow>
              ))}
              <SectionRow><Dash />Size and layout</SectionRow>
              <PropRow><span>Horizontal alignment</span><PropValue>Left</PropValue></PropRow>
              <PropRow><span>Vertical alignment</span><PropValue>Top</PropValue></PropRow>
            </PropList>
          </PropScroll>
          <PanelHead>
            <HeadTitle $pl={7}>Events</HeadTitle>
            <HeadSlot $w={24}><Plus /></HeadSlot>
            <HeadSlot $w={7} />
          </PanelHead>
          <EventsScroll>
            <Thumb $top={15} $h={319} $right={0} />
            <EventList>
              <EventRow $pad={53}><EventName><BoltWrap><Bolt /></BoltWrap>MouseDown event</EventName><span /><RowTool $pl={2}><Plus /></RowTool></EventRow>
              <EventRow $pad={53}><EventName><BoltWrap><Bolt /></BoltWrap>MouseUp event</EventName><span /><RowTool $pl={2}><Plus /></RowTool></EventRow>
              <EventRow $pad={53}><EventName><EventCaret $w={26}><Caret /></EventCaret><BoltWrap $inline><Bolt /></BoltWrap>Rotation transitioned</EventName><span /><RowTool $pl={2}><Plus /></RowTool></EventRow>
              <EventRow $pad={47.5}><EventName><EventCaret><Caret /></EventCaret>Method</EventName><span>.../Commands/VariableCommands/Set</span><RowTool $pl={5.5}><Bin /></RowTool></EventRow>
              <EventRow $pad={63}><EventName><EventCaret><Caret /></EventCaret>Input arguments</EventName></EventRow>
              <EventRow $pad={79}>
                <EventName>VariableToModify<LinkSlot><MdLink size={19} /></LinkSlot></EventName>
                <LinkValue>../../../../../../FillColor@NodeId</LinkValue>
              </EventRow>
              <EventRow $pad={79}>
                <EventName><ArgName>Value</ArgName><TypeTag>Color</TypeTag></EventName>
                <span>#eb001b</span>
                <RowTool $pl={1}><Swatch $c="#eb001b" /></RowTool>
              </EventRow>
              <EventRow $pad={79}><span>ArrayIndex</span><FaintValue>0</FaintValue></EventRow>
              <EventRow $pad={47.5}><span>Transition</span><span>Greater than or equal to</span></EventRow>
              <EventRow $pad={47.5}><span>Value</span><span>90</span></EventRow>
            </EventList>
            <Highlight />
          </EventsScroll>
        </RightPanel>
      </Body>

      <StatusBar>
        <OutputTab $c="#ff7f00" $w={97} $mr={19}>Studio Output</OutputTab>
        <OutputTab $c="#255c9e" $w={115}>Emulator Output</OutputTab>
        <OutputClose><MdCancel size={18} color="#000" /></OutputClose>
        <PushNote><Warn />Local changes available to push.</PushNote>
      </StatusBar>
    </Page>
  );
};

export default App;
